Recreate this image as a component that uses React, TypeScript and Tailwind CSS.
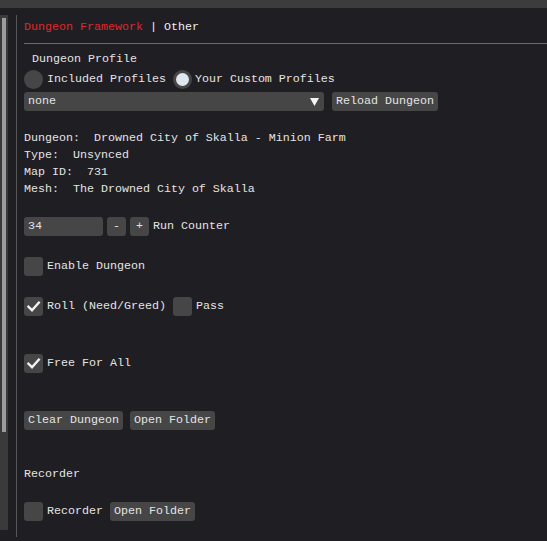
import React from "react";

const Check = () => (
  <svg viewBox="0 0 19 19" className="w-[19px] h-[19px]">
    <path d="M4.5 9.8 L8 13.2 L14.8 5.6" fill="none" stroke="#f2f2f2" strokeWidth="2.4" strokeLinecap="square" />
  </svg>
);

const Checkbox = ({ checked = false }: { checked?: boolean }) => (
  <div className="w-[19px] h-[19px] rounded-[3px] bg-[#464646] shrink-0 flex items-center justify-center">
    {checked && <Check />}
  </div>
);

const Button = ({ children }: { children: React.ReactNode }) => (
  <div className="h-[19px] px-[4px] rounded-[3px] bg-[#464646] flex items-center shrink-0">{children}</div>
);

const Radio = ({ active = false }: { active?: boolean }) => (
  <div className="w-[19px] h-[19px] rounded-full bg-[#464646] flex items-center justify-center shrink-0">
    {active && <div className="w-[13px] h-[13px] rounded-full bg-[#dde8ef]" />}
  </div>
);

export default function App() {
  return (
    <div
      className="w-[547px] h-[541px] bg-[#1f1e23] text-[#e4e4e4] text-[11.67px] leading-[17px] overflow-hidden"
      style={{ fontFamily: '"Liberation Mono", "DejaVu Sans Mono", monospace' }}
    >
      <div className="h-[8px] bg-[#3c3c3c]" />
      <div className="flex">
        {/* scrollbar */}
        <div className="w-[8px] h-[515px] mt-[7px] bg-[#3a3a3a] shrink-0">
          <div className="ml-[2px] mt-[3px] w-[4px] h-[414px] bg-[#9c9c9c]" />
        </div>
        <div className="ml-[8px] mt-[7px] w-px h-[522px] bg-[#575757] shrink-0" />
        <div className="flex-1 pl-[7px] flex flex-col">
          <div className="mt-[11px] h-[17px] whitespace-pre">
            <span className="text-[#e0262b]">Dungeon Framework</span>
            <span className="text-[#f0f0f0]"> | Other</span>
          </div>
          <div className="mt-[7px] h-px bg-[#6a6a6a]" />
          <div className="mt-[7px] h-[17px] pl-[8px]">Dungeon Profile</div>
          <div className="mt-[2px] h-[19px] flex items-center">
            <Radio />
            <span className="ml-[4px]">Included Profiles</span>
            <div className="ml-[7px]">
              <Radio active />
            </div>
            <span className="ml-[3px]">Your Custom Profiles</span>
          </div>
          <div className="mt-[3px] flex items-center">
            <div className="w-[300px] h-[19px] rounded-[3px] bg-[#464646] flex items-center justify-between pl-[4px] pr-[5px]">
              <span>none</span>
              <svg viewBox="0 0 9 8" className="w-[9px] h-[8px]">
                <path d="M0 0 H9 L4.5 8 Z" fill="#f4f4f4" />
              </svg>
            </div>
            <div className="ml-[8px]">
              <Button>Reload Dungeon</Button>
            </div>
          </div>
          <div className="mt-[19px] flex flex-col whitespace-pre">
            <div className="h-[17px]">Dungeon:  Drowned City of Skalla - Minion Farm</div>
            <div className="h-[17px]">Type:  Unsynced</div>
            <div className="h-[17px]">Map ID:  731</div>
            <div className="h-[17px]">Mesh:  The Drowned City of Skalla</div>
          </div>
          <div className="mt-[19px] h-[19px] flex items-center">
            <div className="w-[79px] h-[19px] rounded-[3px] bg-[#464646] flex items-center pl-[4px]">34</div>
            <div className="ml-[4px] w-[19px] h-[19px] rounded-[3px] bg-[#464646] flex items-center justify-center">-</div>
            <div className="ml-[4px] w-[19px] h-[19px] rounded-[3px] bg-[#464646] flex items-center justify-center">+</div>
            <span className="ml-[4px]">Run Counter</span>
          </div>
          <div className="mt-[21px] h-[19px] flex items-center">
            <Checkbox />
            <span className="ml-[4px]">Enable Dungeon</span>
          </div>
          <div className="mt-[21px] h-[19px] flex items-center">
            <Checkbox checked />
            <span className="ml-[4px]">Roll (Need/Greed)</span>
            <div className="ml-[7px]">
              <Checkbox />
            </div>
            <span className="ml-[4px]">Pass</span>
          </div>
          <div className="mt-[38px] h-[19px] flex items-center">
            <Checkbox checked />
            <span className="ml-[4px]">Free For All</span>
          </div>
          <div className="mt-[38px] h-[19px] flex items-center gap-[7px]">
            <Button>Clear Dungeon</Button>
            <Button>Open Folder</Button>
          </div>
          <div className="mt-[36px] h-[17px]">Recorder</div>
          <div className="mt-[19px] h-[19px] flex items-center">
            <Checkbox />
            <span className="ml-[4px]">Recorder</span>
            <div className="ml-[7px]">
              <Button>Open Folder</Button>
            </div>
          </div>
        </div>
      </div>
    </div>
  );
}
